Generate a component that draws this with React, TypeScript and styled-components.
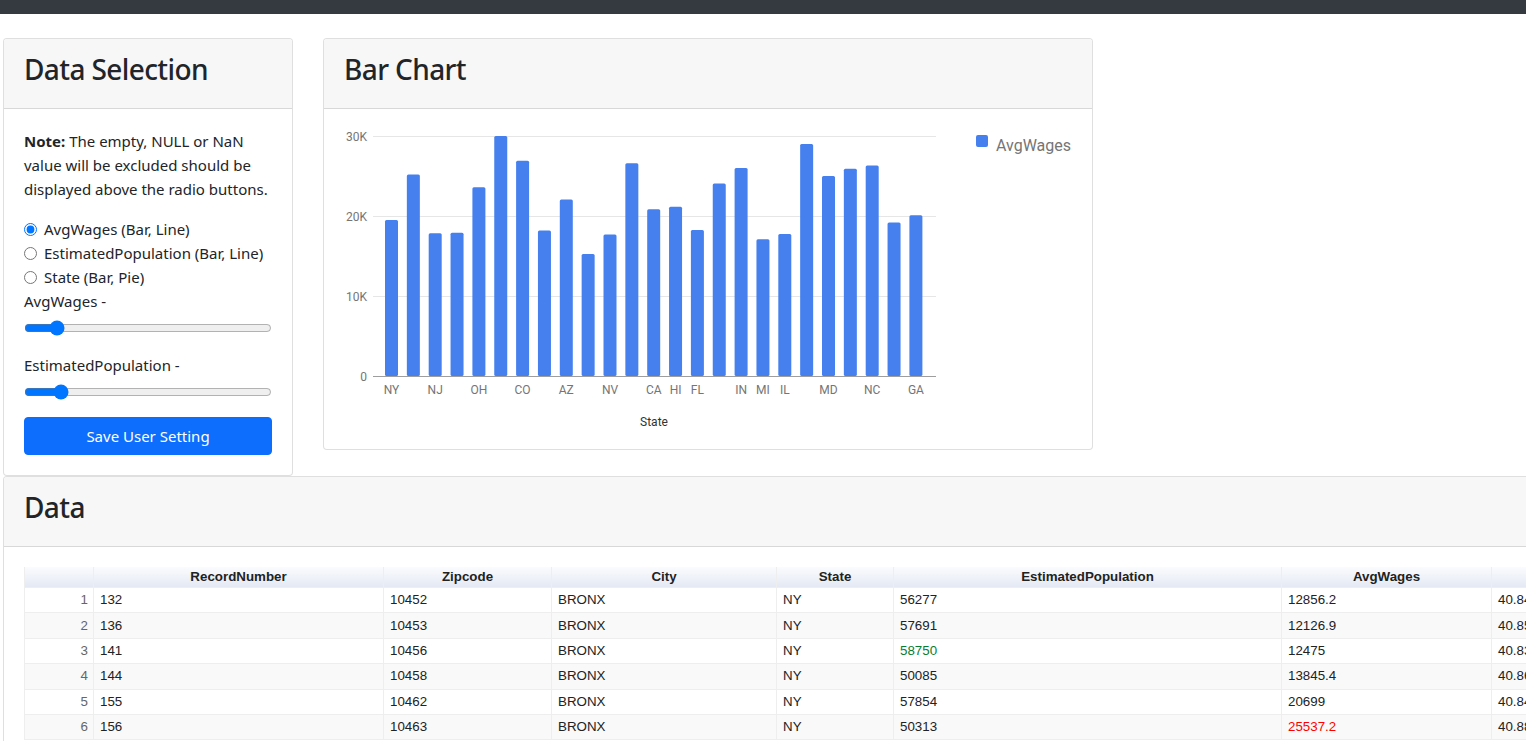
import React from 'react';
import styled, { createGlobalStyle } from 'styled-components';

const GlobalStyle = createGlobalStyle`
  html, body { margin: 0; padding: 0; overflow: hidden; background: #fff; }
  body {
    font-family: "Noto Sans", "Open Sans", sans-serif;
    color: #212529;
    font-size: 16px;
    line-height: 1.5;
  }
  * { box-sizing: border-box; }
`;

const TopBar = styled.div`
  height: 14px;
  background: #343a40;
`;

const Main = styled.main`
  padding: 24px 0 0 3px;
`;

const TopRow = styled.div`
  display: flex;
  align-items: flex-start;
  gap: 30px;
`;

const Card = styled.section<{ $width: number }>`
  width: ${(p) => p.$width}px;
  flex: none;
  border: 1px solid rgba(0, 0, 0, 0.125);
  border-radius: 4px;
  background: #fff;
  overflow: hidden;
`;

const CardHeader = styled.header`
  height: 70px;
  padding: 12px 20px 0;
  background: #f7f7f7;
  border-bottom: 1px solid rgba(0, 0, 0, 0.125);
`;

const Title = styled.h2`
  margin: 0;
  font-size: 28px;
  font-weight: 500;
  letter-spacing: -0.6px;
  line-height: 37px;
  color: #212529;
`;

const CardBody = styled.div<{ $flush?: boolean }>`
  padding: ${(p) => (p.$flush ? '0' : '20px')};
`;

const Note = styled.p`
  margin: 0 0 16px;
  font-size: 15px;
  line-height: 24px;
`;

const RadioRow = styled.label`
  display: flex;
  align-items: center;
  height: 24px;
  font-size: 15px;
  cursor: pointer;
`;

const Radio = styled.input`
  width: 13px;
  height: 13px;
  margin: 0 7px 0 0;
`;

const FieldLabel = styled.div`
  height: 24px;
  line-height: 24px;
  font-size: 15px;
`;

const SliderRow = styled.div`
  height: 40px;
  padding-top: 7px;
`;

const Range = styled.input`
  display: block;
  width: 100%;
  height: 16px;
  margin: 0;
`;

const PrimaryButton = styled.button`
  display: block;
  width: 100%;
  height: 38px;
  border: 1px solid #0d6efd;
  border-radius: 4px;
  background: #0d6efd;
  color: #fff;
  font-family: inherit;
  font-size: 15px;
  cursor: pointer;
`;

const ChartSvg = styled.svg`
  display: block;
  font-family: Roboto, "Liberation Sans", sans-serif;
`;

const Table = styled.table`
  border-collapse: collapse;
  table-layout: fixed;
  width: 1668px;
  font-family: "Liberation Sans", Arial, sans-serif;
  font-size: 13.33px;
  color: #222;
`;

const HeadCell = styled.th`
  height: 18px;
  padding: 0 3px;
  font-weight: bold;
  text-align: center;
  white-space: nowrap;
  background-color: #e4e9f4;
  background-image: linear-gradient(to bottom, rgba(255, 255, 255, 0.85), rgba(255, 255, 255, 0));
  border: 1px solid #eee;
  border-top: 0;
`;

const Row = styled.tr<{ $alt: boolean }>`
  height: 25.4px;
  background: ${(p) => (p.$alt ? '#f9f9f9' : '#fff')};
`;

const Cell = styled.td<{ $tone?: 'green' | 'red' }>`
  padding: 0 6px;
  border: 1px solid #eee;
  white-space: nowrap;
  overflow: hidden;
  color: ${(p) => (p.$tone === 'green' ? '#0a7d2c' : p.$tone === 'red' ? '#ff0000' : '#222')};
`;

const SeqCell = styled.td`
  padding: 0 5px 0 0;
  border: 1px solid #eee;
  text-align: right;
  color: #666;
`;

const values = [
  19.5, 25.2, 17.85, 17.9, 23.6, 30.0, 26.9, 18.2, 22.05, 15.25, 17.7, 26.6, 20.85,
  21.15, 18.25, 24.05, 26.0, 17.1, 17.75, 29.0, 25.0, 25.9, 26.3, 19.2, 20.1,
];
const labels: Record<number, string> = {
  0: 'NY', 2: 'NJ', 4: 'OH', 6: 'CO', 8: 'AZ', 10: 'NV', 12: 'CA', 13: 'HI', 14: 'FL',
  16: 'IN', 17: 'MI', 18: 'IL', 20: 'MD', 22: 'NC', 24: 'GA',
};

const BASE = 267;
const barCenter = (i: number) => 67.5 + i * 21.85;

function BarChart() {
  return (
    <ChartSvg width={768} height={340} viewBox="0 0 768 340">
      {[1, 2, 3].map((k) => (
        <line key={k} x1={49} x2={612} y1={BASE - 80 * k + 0.5} y2={BASE - 80 * k + 0.5} stroke="#e6e6e6" strokeWidth={1} />
      ))}
      {['0', '10K', '20K', '30K'].map((t, k) => (
        <text key={t} x={43} y={BASE - 80 * k + 4.5} textAnchor="end" fontSize={12} fill="#757575">
          {t}
        </text>
      ))}
      {values.map((v, i) => (
        <rect key={i} x={barCenter(i) - 6.5} y={BASE - v * 8} width={13} height={v * 8} rx={1.5} fill="#4680ee" />
      ))}
      <line x1={49} x2={612} y1={BASE + 0.5} y2={BASE + 0.5} stroke="#9e9e9e" strokeWidth={1} />
      {Object.entries(labels).map(([i, l]) => (
        <text key={l} x={barCenter(Number(i))} y={285} textAnchor="middle" fontSize={12} fill="#757575">
          {l}
        </text>
      ))}
      <text x={330} y={317} textAnchor="middle" fontSize={12} fill="#333">
        State
      </text>
      <rect x={652} y={26} width={12} height={12} rx={2} fill="#4680ee" />
      <text x={672} y={42} fontSize={16} fill="#757575">
        AvgWages
      </text>
    </ChartSvg>
  );
}

const columns = [
  { name: '', width: 69 },
  { name: 'RecordNumber', width: 290 },
  { name: 'Zipcode', width: 168 },
  { name: 'City', width: 225 },
  { name: 'State', width: 117 },
  { name: 'EstimatedPopulation', width: 388 },
  { name: 'AvgWages', width: 210 },
  { name: 'Lat', width: 201 },
];

type Tone = 'green' | 'red' | undefined;
const rows: { rec: string; zip: string; pop: string; popTone?: Tone; wage: string; wageTone?: Tone; lat: string }[] = [
  { rec: '132', zip: '10452', pop: '56277', wage: '12856.2', lat: '40.84' },
  { rec: '136', zip: '10453', pop: '57691', wage: '12126.9', lat: '40.85' },
  { rec: '141', zip: '10456', pop: '58750', popTone: 'green', wage: '12475', lat: '40.83' },
  { rec: '144', zip: '10458', pop: '50085', wage: '13845.4', lat: '40.86' },
  { rec: '155', zip: '10462', pop: '57854', wage: '20699', lat: '40.84' },
  { rec: '156', zip: '10463', pop: '50313', wage: '25537.2', wageTone: 'red', lat: '40.88' },
];

export default function App() {
  return (
    <>
      <GlobalStyle />
      <TopBar />
      <Main>
        <TopRow>
          <Card $width={290}>
            <CardHeader>
              <Title>Data Selection</Title>
            </CardHeader>
            <CardBody>
              <Note>
                <strong>Note:</strong> The empty, NULL or NaN value will be excluded should be displayed above the radio buttons.
              </Note>
              <RadioRow>
                <Radio type="radio" name="field" defaultChecked />
                AvgWages (Bar, Line)
              </RadioRow>
              <RadioRow>
                <Radio type="radio" name="field" />
                EstimatedPopulation (Bar, Line)
              </RadioRow>
              <RadioRow>
                <Radio type="radio" name="field" />
                State (Bar, Pie)
              </RadioRow>
              <FieldLabel>AvgWages -</FieldLabel>
              <SliderRow>
                <Range type="range" min={0} max={100} defaultValue={10.6} step="any" />
              </SliderRow>
              <FieldLabel>EstimatedPopulation -</FieldLabel>
              <SliderRow>
                <Range type="range" min={0} max={100} defaultValue={12.4} step="any" />
              </SliderRow>
              <PrimaryButton type="button">Save User Setting</PrimaryButton>
            </CardBody>
          </Card>
          <Card $width={770}>
            <CardHeader>
              <Title>Bar Chart</Title>
            </CardHeader>
            <CardBody $flush>
              <BarChart />
            </CardBody>
          </Card>
        </TopRow>
        <Card $width={1710}>
          <CardHeader>
            <Title>Data</Title>
          </CardHeader>
          <CardBody>
            <Table>
              <colgroup>
                {columns.map((c, i) => (
                  <col key={i} style={{ width: c.width }} />
                ))}
              </colgroup>
              <thead>
                <tr>
                  {columns.map((c, i) => (
                    <HeadCell key={i}>{c.name}</HeadCell>
                  ))}
                </tr>
              </thead>
              <tbody>
                {rows.map((r, i) => (
                  <Row key={r.rec} $alt={i % 2 === 1}>
                    <SeqCell>{i + 1}</SeqCell>
                    <Cell>{r.rec}</Cell>
                    <Cell>{r.zip}</Cell>
                    <Cell>BRONX</Cell>
                    <Cell>NY</Cell>
                    <Cell $tone={r.popTone}>{r.pop}</Cell>
                    <Cell $tone={r.wageTone}>{r.wage}</Cell>
                    <Cell>{r.lat}</Cell>
                  </Row>
                ))}
              </tbody>
            </Table>
          </CardBody>
        </Card>
      </Main>
    </>
  );
}
